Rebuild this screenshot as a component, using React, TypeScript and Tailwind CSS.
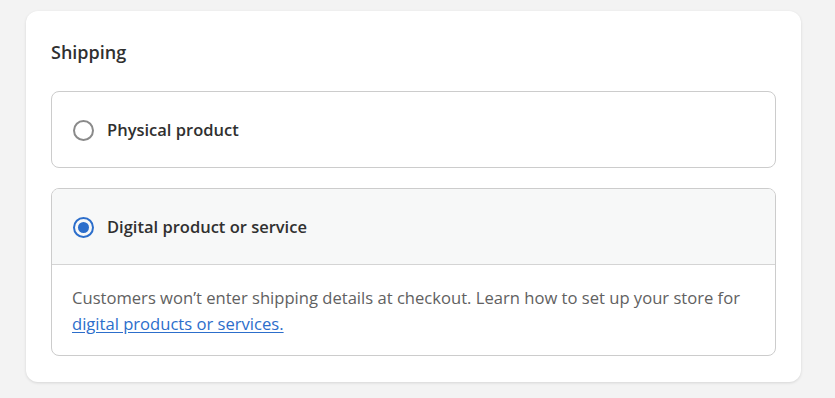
import React from 'react';

const Radio = ({ checked }: { checked: boolean }) =>
  checked ? (
    <span className="flex h-[21px] w-[21px] items-center justify-center rounded-full border-2 border-[#2c6ecb]">
      <span className="h-[11px] w-[11px] rounded-full bg-[#2c6ecb]" />
    </span>
  ) : (
    <span className="h-[21px] w-[21px] rounded-full border-2 border-[#8a8a8a]" />
  );

const App = () => {
  return (
    <div
      className="min-h-[398px] bg-[#f3f3f3] pl-[26px] pr-[34px] pt-[11px] pb-[17px]"
      style={{ fontFamily: '"Open Sans", "Noto Sans", sans-serif' }}
    >
      <div className="rounded-xl bg-white px-[25px] pb-[26px] pt-[29px] shadow-[0_1px_3px_rgba(0,0,0,0.12)]">
        <h2 className="text-[18px] font-semibold leading-6 text-[#303030]">Shipping</h2>

        <div className="mt-[27px] flex flex-col gap-[20px]">
          <label className="flex h-[77px] items-center gap-[13px] rounded-lg border border-[#cccccc] px-[21px] pt-px">
            <Radio checked={false} />
            <span className="text-[16.5px] font-semibold text-[#303030]">Physical product</span>
          </label>

          <div className="overflow-hidden rounded-lg border border-[#cccccc]">
            <label className="flex h-[76px] items-center gap-[13px] border-b border-[#d4d4d4] bg-[#f7f8f8] px-[21px] pt-[2px]">
              <Radio checked={true} />
              <span className="text-[16.5px] font-semibold text-[#303030]">Digital product or service</span>
            </label>
            <p className="px-[20px] pb-[18px] pt-[20px] text-[16.6px] leading-[26px] text-[#616161]">
              Customers won’t enter shipping details at checkout. Learn how to set up your store for{' '}
              <a href="#" className="text-[#2c6ecb] underline underline-offset-2">
                digital products or services.
              </a>
            </p>
          </div>
        </div>
      </div>
    </div>
  );
};

export default App;
